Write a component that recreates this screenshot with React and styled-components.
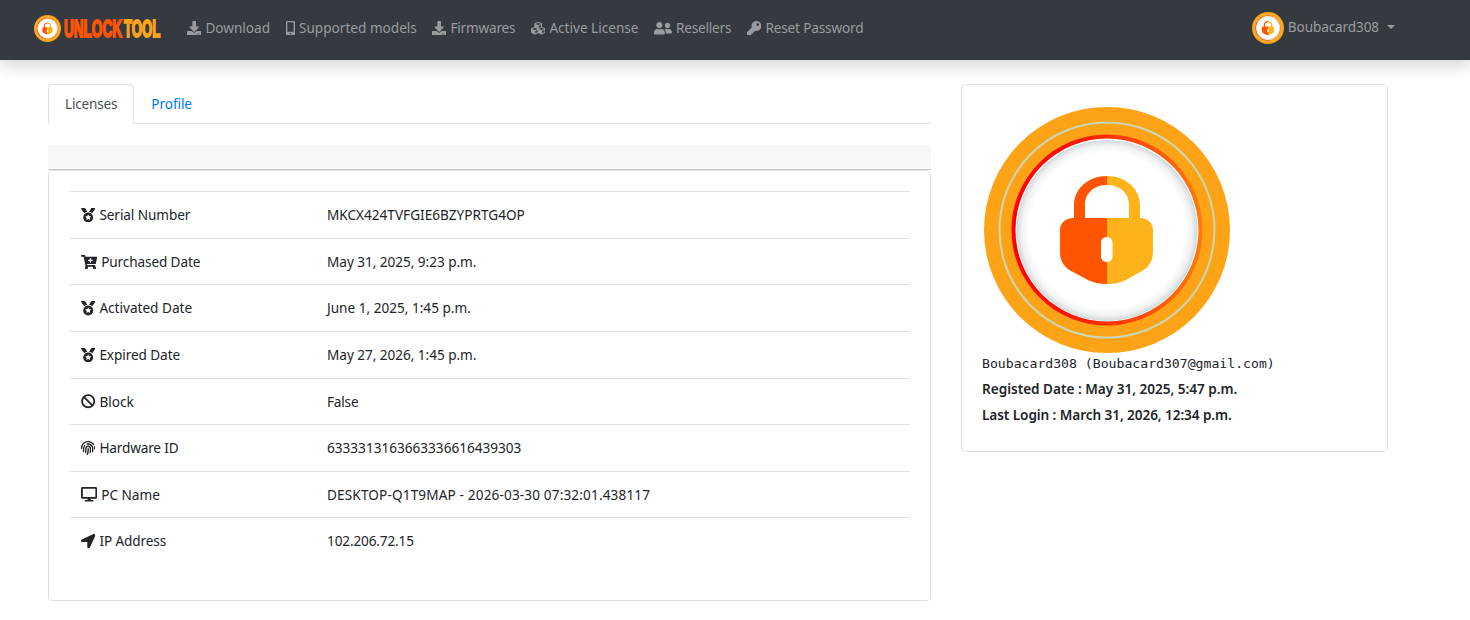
import React, { useId } from "react";
import styled, { createGlobalStyle } from "styled-components";
import {
  FaBan,
  FaCartPlus,
  FaCubes,
  FaDesktop,
  FaDownload,
  FaFingerprint,
  FaKey,
  FaLocationArrow,
  FaMedal,
  FaMobileAlt,
  FaUserFriends
} from "react-icons/fa";

const GlobalStyle = createGlobalStyle`
  * {
    box-sizing: border-box;
  }
  body {
    margin: 0;
    background: #fff;
    color: #212529;
    font-family: "Noto Sans", "Open Sans", sans-serif;
    font-size: 13.6px;
    line-height: 22px;
  }
`;

const Navbar = styled.nav`
  position: relative;
  display: flex;
  align-items: center;
  height: 60px;
  padding: 0 75px 4px 34px;
  background: #343a40;
  box-shadow: 0 7px 14px rgba(0, 0, 0, 0.15);
`;

const Brand = styled.a`
  display: flex;
  align-items: center;
  width: 153px;
  height: 28px;
`;

const NavList = styled.ul`
  display: flex;
  flex: 1;
  margin: 0;
  padding: 0;
  list-style: none;
`;

const NavItem = styled.li`
  display: flex;
  align-items: center;
  width: ${props => props.width}px;
  color: #999c9f;
  letter-spacing: ${props => props.track || 0}px;
  white-space: nowrap;
  svg {
    flex: none;
    height: 14.4px;
    width: ${props => props.iconWidth || 14.4}px;
    margin-right: 4px;
  }
`;

const UserMenu = styled.div`
  display: flex;
  align-items: center;
  color: #999c9f;
  .name {
    margin: 0 8px 2px 4px;
    letter-spacing: -0.12px;
  }
`;

const Caret = styled.span`
  border: 4.5px solid transparent;
  border-top-color: #999c9f;
  border-bottom: 0;
  margin-bottom: 3px;
`;

const Page = styled.main`
  display: flex;
  align-items: flex-start;
  gap: 30px;
  padding: 24px 82px 0 48px;
`;

const Main = styled.section`
  width: 883px;
`;

const Tabs = styled.div`
  display: flex;
  height: 40px;
  border-bottom: 1px solid #dee2e6;
`;

const Tab = styled.a`
  height: 40px;
  padding: 8px 16px 0 16px;
  border: 1px solid ${props => props.active ? "#dee2e6" : "transparent"};
  border-bottom-color: ${props => props.active ? "#fff" : "transparent"};
  border-radius: 4px 4px 0 0;
  background: ${props => props.active ? "#fff" : "transparent"};
  color: ${props => props.active ? "#495057" : "#007bff"};
  letter-spacing: ${props => props.active ? -0.2 : -0.08}px;
`;

const Strip = styled.div`
  height: 25px;
  margin-top: 21px;
  background: #f7f7f7;
  border-bottom: 1px solid #c9c9c9;
`;

const Card = styled.div`
  border: 1px solid #dfdfdf;
  border-radius: 4px;
  background: #fff;
`;

const LicenseCard = styled(Card)`
  height: 431px;
  padding: 20.15px 20px 0;
`;

const Row = styled.div`
  display: grid;
  grid-template-columns: 246px 1fr;
  align-items: center;
  height: 46.6px;
  padding: 0.4px 12px 0;
  border-top: 1px solid #dee2e6;
`;

const Label = styled.div`
  display: flex;
  align-items: center;
  letter-spacing: ${props => props.track || 0}px;
  svg {
    height: 14.4px;
    width: ${props => props.iconWidth || 14.4}px;
    margin-right: 4px;
  }
`;

const Value = styled.div`
  letter-spacing: ${props => props.track || 0}px;
`;

const ProfileCard = styled(Card)`
  width: 427px;
  height: 368px;
  padding: 22px 20px 0;
`;

const Picture = styled.div`
  height: 246px;
  padding-left: 2px;
`;

const Account = styled.div`
  font-family: "DejaVu Sans Mono", monospace;
  font-size: 13.15px;
`;

const Meta = styled.div`
  height: 26px;
  font-weight: 600;
  line-height: 28px;
  letter-spacing: ${props => props.track || 0}px;
`;

const Lock = ({ size }) => {
  const id = useId();
  return (
    <svg width={size} height={size} viewBox="0 0 246 246">
      <defs>
        <linearGradient id={`${id}ring`} x1="0" x2="1" y1="0" y2="0">
          <stop offset="0" stopColor="#ff0000" />
          <stop offset="0.3" stopColor="#ff1400" />
          <stop offset="1" stopColor="#ff7a0c" />
        </linearGradient>
        <radialGradient id={`${id}face`}>
          <stop offset="0.86" stopColor="#fff" />
          <stop offset="0.94" stopColor="#f0f2f3" />
          <stop offset="1" stopColor="#d3d8db" />
        </radialGradient>
      </defs>
      <circle cx="123" cy="123" r="123" fill="#ffa316" />
      <circle cx="123" cy="123" r="107.5" fill="none" stroke="#c8d8b4" strokeWidth="2" />
      <circle cx="123" cy="123" r="95.5" fill={`url(#${id}ring)`} />
      <circle cx="123" cy="123" r="91.5" fill="#fff" />
      <circle cx="123" cy="123.5" r="90.5" fill={`url(#${id}face)`} />
      <path d="M123 69 C104 69 90 82 90 98 V111 C81 111 76 116 76 123 V145 C76 154 80 160 87 164 L104 173 C111 176 115 177 123 177 V111 H101 V98 C101 86 110 78 123 78 Z" fill="#ff5500" />
      <path d="M123 69 C142 69 156 82 156 98 V111 C164 111 169 116 169 123 V145 C169 154 165 160 158 164 L142 173 C135 176 131 177 123 177 V111 H145 V98 C145 86 136 78 123 78 Z" fill="#ffb31a" />
      <rect x="117" y="130" width="11.5" height="25" rx="5.5" fill="#fff" />
    </svg>
  );
};

const Wordmark = styled.svg`
  font-family: "Liberation Sans", sans-serif;
  font-size: 24px;
  font-weight: 700;
  stroke-width: 1.9;
`;

const Logo = () => (
  <Wordmark width="102" height="30" viewBox="0 -1 102 30">
    <text transform="translate(3 22.8) scale(0.565 1)" fill="#ff5500" stroke="#ff5500">UNLOCK</text>
    <text transform="translate(63 22.8) scale(0.55 1)" fill="#fba31c" stroke="#fba31c">TOOL</text>
  </Wordmark>
);

const navItems = [
  { text: "Download", icon: FaDownload, width: 99 },
  { text: "Supported models", icon: FaMobileAlt, width: 146, iconWidth: 9 },
  { text: "Firmwares", icon: FaDownload, width: 99, track: -0.2 },
  { text: "Active License", icon: FaCubes, width: 123 },
  { text: "Resellers", icon: FaUserFriends, width: 93, iconWidth: 18, track: -0.2 },
  { text: "Reset Password", icon: FaKey, width: 120, track: -0.16 }
];

const license = [
  { label: "Serial Number", icon: FaMedal, track: -0.08, value: "MKCX424TVFGIE6BZYPRTG4OP" },
  { label: "Purchased Date", icon: FaCartPlus, iconWidth: 16.2, track: -0.12, value: "May 31, 2025, 9:23 p.m.", valueTrack: -0.04 },
  { label: "Activated Date", icon: FaMedal, value: "June 1, 2025, 1:45 p.m." },
  { label: "Expired Date", icon: FaMedal, track: -0.08, value: "May 27, 2026, 1:45 p.m.", valueTrack: -0.04 },
  { label: "Block", icon: FaBan, value: "False", valueTrack: -0.2 },
  { label: "Hardware ID", icon: FaFingerprint, track: -0.16, value: "6333313163663336616439303" },
  { label: "PC Name", icon: FaDesktop, iconWidth: 16.2, value: "DESKTOP-Q1T9MAP - 2026-03-30 07:32:01.438117", valueTrack: 0.14 },
  { label: "IP Address", icon: FaLocationArrow, track: -0.1, value: "102.206.72.15", valueTrack: -0.14 }
];

export default () => {
  return (
    <>
      <GlobalStyle />
      <Navbar>
        <Brand>
          <Lock size={27} />
          <Logo />
        </Brand>
        <NavList>
          {navItems.map(({ text, icon: Icon, ...rest }) => (
            <NavItem key={text} {...rest}>
              <Icon />
              {text}
            </NavItem>
          ))}
        </NavList>
        <UserMenu>
          <Lock size={32} />
          <span className="name">Boubacard308</span>
          <Caret />
        </UserMenu>
      </Navbar>
      <Page>
        <Main>
          <Tabs>
            <Tab active>Licenses</Tab>
            <Tab>Profile</Tab>
          </Tabs>
          <Strip />
          <LicenseCard>
            {license.map(({ label, icon: Icon, iconWidth, track, value, valueTrack }) => (
              <Row key={label}>
                <Label iconWidth={iconWidth} track={track}>
                  <Icon />
                  {label}
                </Label>
                <Value track={valueTrack}>{value}</Value>
              </Row>
            ))}
          </LicenseCard>
        </Main>
        <ProfileCard>
          <Picture>
            <Lock size={246} />
          </Picture>
          <Account>Boubacard308 (Boubacard307@gmail.com)</Account>
          <Meta track={-0.02}>Registed Date : May 31, 2025, 5:47 p.m.</Meta>
          <Meta track={-0.08}>Last Login : March 31, 2026, 12:34 p.m.</Meta>
        </ProfileCard>
      </Page>
    </>
  );
}
